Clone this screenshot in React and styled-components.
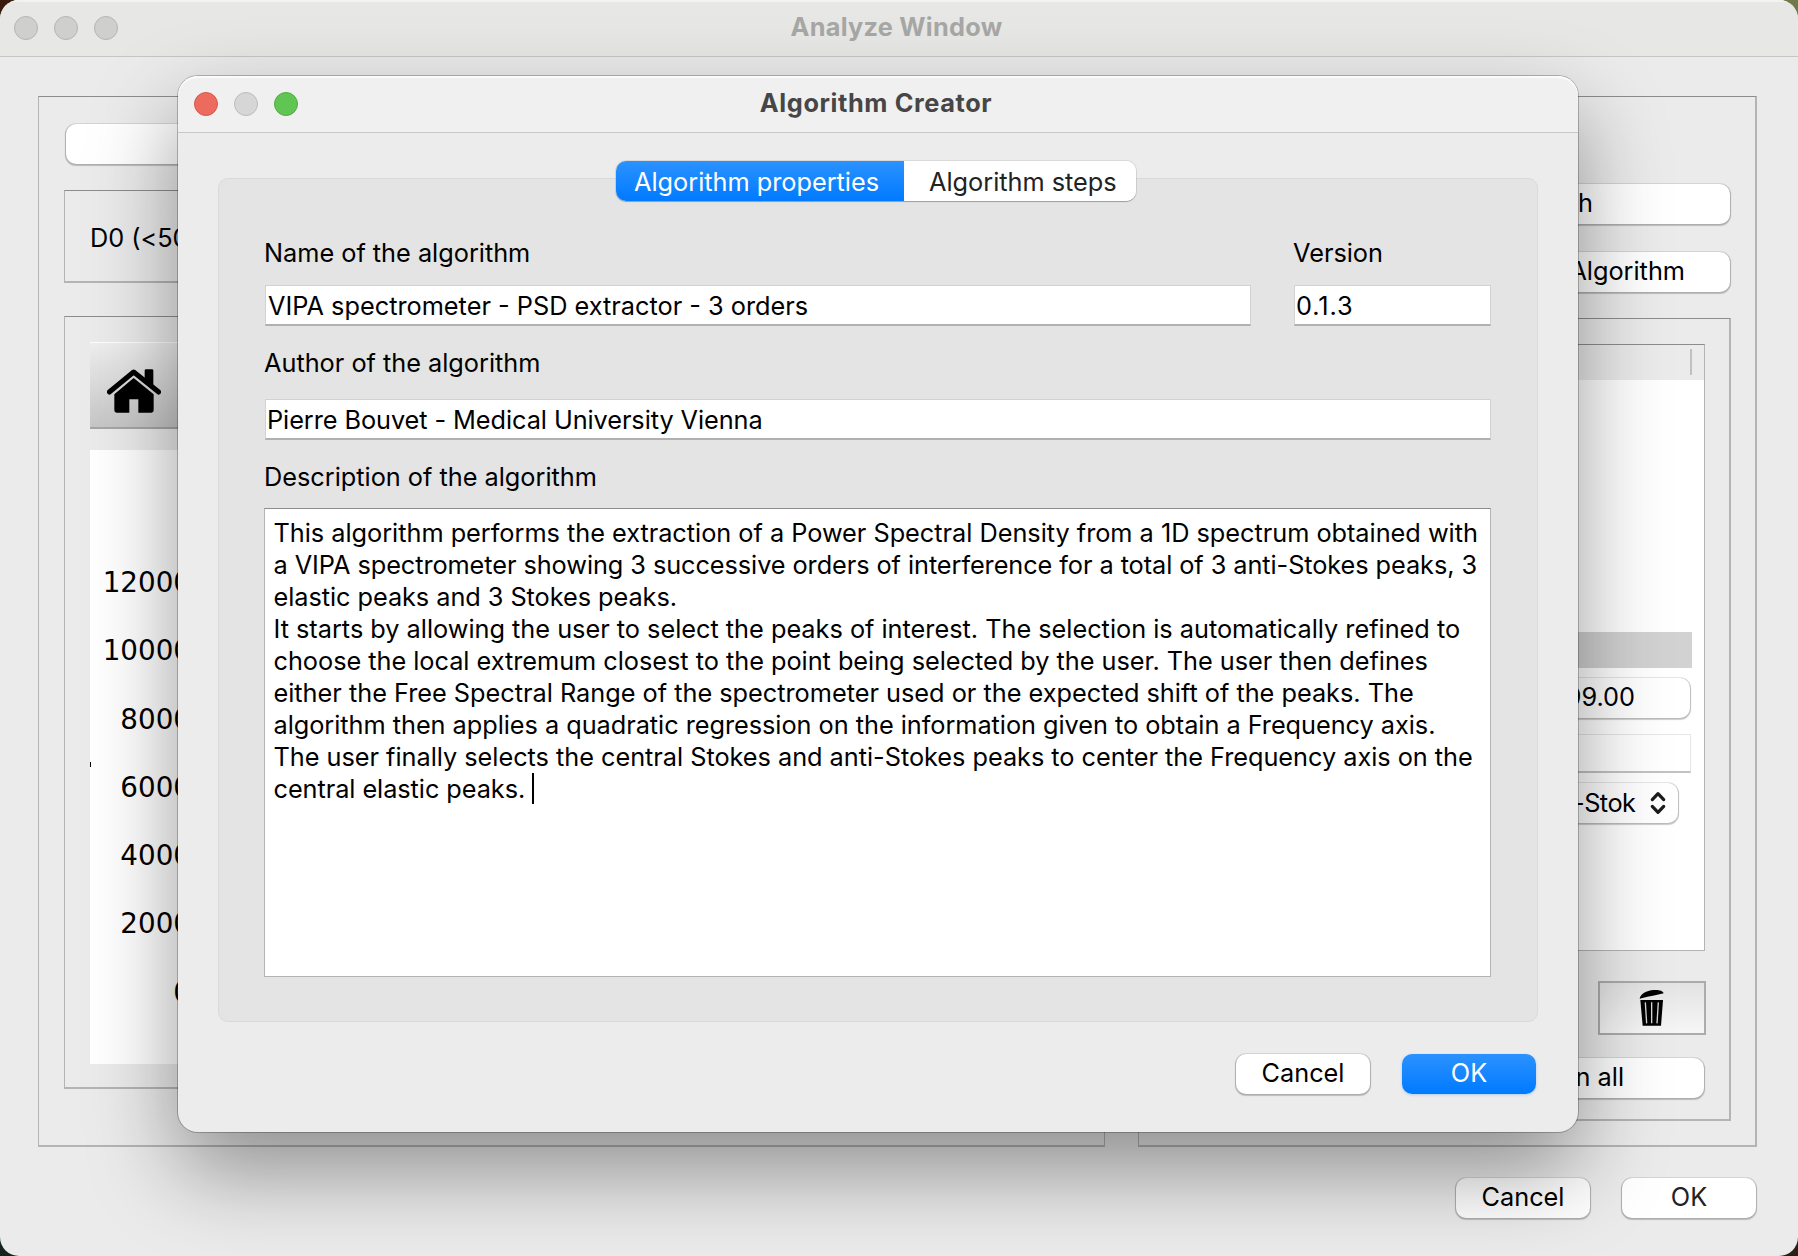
import React from "react";
import styled, { createGlobalStyle, css } from "styled-components";

const GlobalStyle = createGlobalStyle`
  *, *::before, *::after { box-sizing: border-box; }
  body {
    margin: 0;
    overflow: hidden;
    background: linear-gradient(90deg, #3a1a0c 0 50%, #6f7a4a 50% 100%) top / 100% 50% no-repeat,
      linear-gradient(90deg, #15241c 0 50%, #2a2114 50% 100%) bottom / 100% 50% no-repeat;
    font-family: Inter, "Liberation Sans", sans-serif;
    font-size: 25.3px;
    letter-spacing: -0.01px;
    line-height: 32px;
    color: #000;
  }
`;

const Desktop = styled.div`
  position: relative;
  width: 1798px;
  height: 1256px;
`;

const MainWindow = styled.main`
  display: flex;
  flex-direction: column;
  height: 100%;
  border-radius: 19px;
  background: #ebebeb;
  overflow: hidden;
`;

const TitleBar = styled.header`
  flex: none;
  display: grid;
  grid-template-columns: 1fr auto 1fr;
  align-items: center;
  height: 57px;
  padding: ${(p) => (p.$active ? "0 20px 1px 16px" : "0 19px 1px 14px")};
  background: ${(p) => (p.$active ? "#f0f0f0" : "#e7e7e5")};
  border-bottom: 1px solid ${(p) => (p.$active ? "#c8c8c8" : "#c6c6c5")};
  box-shadow: inset 0 2px 1px ${(p) => (p.$active ? "#fbfbfb" : "#f3f3f2")};
`;

const Lights = styled.div`
  display: flex;
  gap: 16px;
`;

const Light = styled.span`
  width: 24px;
  height: 24px;
  border-radius: 50%;
  border: 1px solid ${(p) => p.$edge};
  background: ${(p) => p.$fill};
`;

const Title = styled.h1`
  margin: 0;
  font-size: 25.3px;
  font-weight: 700;
  letter-spacing: ${(p) => p.$tracking}px;
  color: ${(p) => (p.$active ? "#464646" : "#a7a7a5")};
  transform: translateY(-1px);
`;

const MainBody = styled.div`
  flex: 1;
  display: flex;
  flex-direction: column;
  padding: 39px 41px 0 38px;
`;

const Columns = styled.div`
  display: flex;
  gap: 33px;
  height: 1051px;
`;

const frame = css`
  border: 1px solid #b4b4b4;
  border-top-color: #8c8c8c;
  border-bottom-width: 2px;
`;

const LeftGroup = styled.section`
  ${frame}
  width: 1067px;
  display: flex;
  flex-direction: column;
  padding: 27px 25px 56px;

  & > button {
    margin: 0 2px;
  }
`;

const RightGroup = styled.section`
  ${frame}
  border-right-width: 2px;
  flex: 1;
  display: flex;
  flex-direction: column;
  padding: 87px 24px 24px;
`;

const DetectorBox = styled.div`
  ${frame}
  display: flex;
  align-items: center;
  height: 93px;
  margin-top: 26px;
  padding: 3px 25px 0;
`;

const PlotBox = styled.div`
  ${frame}
  flex: 1;
  display: flex;
  flex-direction: column;
  margin-top: 33px;
  padding: 25px 25px 23px;
`;

const PlotToolbar = styled.div`
  display: flex;
  height: 87px;
  padding: 26px 17px 0;
  border-top: 1px solid #fff;
  border-bottom: 2px solid #a6a6a6;
  background: linear-gradient(#eeeeee, #c6c6c6);
`;

const PlotCanvas = styled.div`
  flex: 1;
  display: flex;
  margin-top: 21px;
  background: #fff;
`;

const AxisMark = styled.span`
  width: 1px;
  height: 5px;
  margin-top: 312px;
  background: #000;
`;

const Ticks = styled.ol`
  list-style: none;
  margin: 0;
  padding: 99px 0 0;
  width: 100px;
  font: 27.78px/68.25px "DejaVu Sans", sans-serif;
  letter-spacing: 0;
  text-align: right;
`;

const Button = styled.button`
  flex: none;
  display: flex;
  align-items: center;
  justify-content: ${(p) => (p.$end ? "flex-end" : "center")};
  width: ${(p) => (p.$width ? p.$width + "px" : "auto")};
  height: 40px;
  margin: 0;
  padding: 0 ${(p) => p.$end || 0}px 3px 0;
  border: 0;
  border-radius: 10px;
  font: inherit;
  letter-spacing: inherit;
  color: ${(p) => (p.$primary ? "#fff" : p.$soft ? "#222" : "#000")};
  background: ${(p) => (p.$primary ? "linear-gradient(#2b92ff, #007aff)" : "#fff")};
  box-shadow: ${(p) =>
    p.$primary
      ? "0 1px 3px rgba(0, 110, 240, 0.25)"
      : "0 0 0 1px rgba(0, 0, 0, 0.08), 0 1px 1px 1px rgba(0, 0, 0, 0.2)"};
`;

const Stack = styled.div`
  display: flex;
  flex-direction: column;
  gap: 28px;
  margin-right: 1px;
`;

const AlgorithmBox = styled.div`
  ${frame}
  border-right-width: 2px;
  flex: 1;
  display: flex;
  flex-direction: column;
  margin-top: 26px;
  padding: 25px 24px 0;
`;

const Tree = styled.div`
  display: flex;
  flex-direction: column;
  height: 607px;
  border: 1px solid #b4b4b4;
  border-top-color: #8c8c8c;
  background: #fff;
`;

const TreeHeader = styled.div`
  display: flex;
  justify-content: flex-end;
  height: 35px;
  padding: 4px 12px 5px;
  background: #ebebeb;

  &::after {
    content: "";
    width: 2px;
    background: #c1c1c1;
  }
`;

const TreeRow = styled.div`
  height: 36px;
  margin: 252px 12px 0 0;
  background: #d2d2d2;
`;

const SpinField = styled(Button)`
  margin: 10px 14px 0 0;
`;

const TreeInput = styled.div`
  height: 39px;
  margin: 16px 13px 0 0;
  border: 1px solid #e6e6e6;
  border-bottom: 2px solid #c2c2c2;
`;

const Combo = styled(Button)`
  margin: 10px 26px 0 0;
  padding: 0 12px 1px 0;
  gap: 14px;
`;

const ComboText = styled.span`
  width: 63px;
  overflow: hidden;
  white-space: nowrap;
  letter-spacing: -0.5px;
`;

const TrashButton = styled.button`
  align-self: flex-end;
  display: grid;
  place-items: center;
  width: 108px;
  height: 54px;
  margin: 30px -1px 23px 0;
  padding: 0;
  border: 2px solid #acacac;
  background: linear-gradient(#e3e3e3, #f6f6f6);
`;

const RunButton = styled(Button)`
  margin-right: 1px;
`;

const Actions = styled.div`
  display: flex;
  justify-content: flex-end;
  gap: 32px;
  padding: ${(p) => p.$top}px ${(p) => p.$right}px 0 0;
`;

const Dialog = styled.section`
  position: absolute;
  left: 178px;
  top: 76px;
  width: 1400px;
  height: 1056px;
  display: flex;
  flex-direction: column;
  border-radius: 20px;
  background: #ececec;
  box-shadow: 0 0 0 1px rgba(0, 0, 0, 0.24), 0 38px 88px rgba(0, 0, 0, 0.4);

  & > header {
    border-radius: 20px 20px 0 0;
  }
`;

const DialogBody = styled.div`
  flex: 1;
  display: flex;
  flex-direction: column;
  padding: 28px 40px 0;
`;

const Tabs = styled.div`
  position: relative;
  align-self: center;
  display: flex;
  width: 520px;
  height: 40px;
  margin-right: 4px;
  border-radius: 10px;
  background: #fff;
  box-shadow: 0 0 0 1px rgba(0, 0, 0, 0.08), 0 1px 1px rgba(0, 0, 0, 0.25);
`;

const Tab = styled.button`
  width: ${(p) => p.$width}px;
  margin: 0;
  padding: 1px 0 0 ${(p) => p.$inset}px;
  border: 0;
  border-radius: ${(p) => (p.$selected ? "10px 0 0 10px" : "0 10px 10px 0")};
  font: inherit;
  letter-spacing: inherit;
  text-align: left;
  color: ${(p) => (p.$selected ? "#fff" : "#222")};
  background: ${(p) => (p.$selected ? "linear-gradient(#2b92ff, #007aff)" : "#fff")};
`;

const Panel = styled.div`
  display: flex;
  flex-direction: column;
  height: 844px;
  margin: -23px 0 0;
  padding: 58px 46px 0 45px;
  border: 1px solid #dadada;
  border-radius: 10px;
  background: #e4e4e4;
`;

const FieldRow = styled.div`
  display: flex;
  gap: 42px;
`;

const Field = styled.label`
  display: flex;
  flex-direction: column;
  width: ${(p) => (p.$width ? p.$width + "px" : "auto")};
  margin-top: ${(p) => p.$top || 0}px;
`;

const FieldLabel = styled.span`
  height: 32px;
  margin-bottom: ${(p) => p.$gap}px;
`;

const Input = styled.span`
  height: 41px;
  margin-left: 1px;
  padding: 4px 2px 0 ${(p) => p.$inset ?? 2}px;
  border: 1px solid #d2d2d2;
  border-bottom: 2px solid #b0b0b0;
  background: #fff;
  letter-spacing: ${(p) => p.$tracking || 0}px;
  white-space: nowrap;
`;

const TextArea = styled.div`
  height: 469px;
  padding: 8px 0 0 8.5px;
  border: 1px solid #b4b4b4;
  border-top-color: #8c8c8c;
  background: #fff;
`;

const Line = styled.div`
  display: flex;
  height: 32.05px;
  white-space: pre;
  letter-spacing: ${(p) => p.$tracking}px;
`;

const Caret = styled.i`
  width: 2px;
  height: 31px;
  background: #000;
`;

const HomeIcon = () => (
  <svg width="54" height="44" viewBox="57 94 162 132">
    <path d="M137 121 L197 170 V218 Q197 225 190 225 H151 V185 H124 V225 H86 Q79 225 79 218 V170 Z" />
    <path d="M170 99 Q170 95 174 95 H192 Q196 95 196 99 V146 L170 124 Z" />
    <path d="M64 163 L137 103 L212 163" fill="none" stroke="#000" strokeWidth="15" strokeLinecap="round" strokeLinejoin="round" />
  </svg>
);

const TrashIcon = () => (
  <svg width="26" height="38" viewBox="148 42 78 114">
    <path d="M150 71 C152 58 170 46 192 45 C208 44 220 47 222 55 Q200 60 150 71 Z" />
    <path d="M152 75 H220 L214 152 H159 Z" />
    <path d="M167 82 L171 145 M186 82 V145 M206 82 L202 145" stroke="#d8d8d8" strokeWidth="4" />
  </svg>
);

const UpDownIcon = () => (
  <svg width="16" height="24" viewBox="0 0 16 24" fill="none" stroke="#1c1c1c" strokeWidth="3.2" strokeLinecap="round" strokeLinejoin="round">
    <path d="M2.3 8.6 L8 2.6 L13.7 8.6 M2.3 15.4 L8 21.4 L13.7 15.4" />
  </svg>
);

const idle = { $fill: "#cfcfcd", $edge: "#b4b4b2" };

const DESCRIPTION = [
  ["This algorithm performs the extraction of a Power Spectral Density from a 1D spectrum obtained with", -0.02],
  ["a VIPA spectrometer showing 3 successive orders of interference for a total of 3 anti-Stokes peaks, 3", -0.07],
  ["elastic peaks and 3 Stokes peaks.", -0.05],
  ["It starts by allowing the user to select the peaks of interest. The selection is automatically refined to", -0.01],
  ["choose the local extremum closest to the point being selected by the user. The user then defines", -0.026],
  ["either the Free Spectral Range of the spectrometer used or the expected shift of the peaks. The", -0.009],
  ["algorithm then applies a quadratic regression on the information given to obtain a Frequency axis.", -0.035],
  ["The user finally selects the central Stokes and anti-Stokes peaks to center the Frequency axis on the", -0.025],
  ["central elastic peaks. ", -0.06],
];

const TICKS = [12000, 10000, 8000, 6000, 4000, 2000, 0];

export default function App() {
  return (
    <Desktop>
      <GlobalStyle />
      <MainWindow>
        <TitleBar>
          <Lights>
            <Light {...idle} />
            <Light {...idle} />
            <Light {...idle} />
          </Lights>
          <Title $tracking={0.26}>Analyze Window</Title>
        </TitleBar>
        <MainBody>
          <Columns>
            <LeftGroup>
              <Button />
              <DetectorBox>D0 (&lt;50</DetectorBox>
              <PlotBox>
                <PlotToolbar>
                  <HomeIcon />
                </PlotToolbar>
                <PlotCanvas>
                  <AxisMark />
                  <Ticks>
                    {TICKS.map((t) => (
                      <li key={t}>{t}</li>
                    ))}
                  </Ticks>
                </PlotCanvas>
              </PlotBox>
            </LeftGroup>
            <RightGroup>
              <Stack>
                <Button $end={137}>h</Button>
                <Button $end={45}>Algorithm</Button>
              </Stack>
              <AlgorithmBox>
                <Tree>
                  <TreeHeader />
                  <TreeRow />
                  <SpinField $end={55}>99.00</SpinField>
                  <TreeInput />
                  <Combo $end={12}>
                    <ComboText>-Stokes</ComboText>
                    <UpDownIcon />
                  </Combo>
                </Tree>
                <TrashButton>
                  <TrashIcon />
                </TrashButton>
                <RunButton $end={80}>n all</RunButton>
              </AlgorithmBox>
            </RightGroup>
          </Columns>
          <Actions $top={31} $right={1}>
            <Button $width={134}>Cancel</Button>
            <Button $width={134} $soft>OK</Button>
          </Actions>
        </MainBody>
      </MainWindow>

      <Dialog>
        <TitleBar $active>
          <Lights>
            <Light $fill="#ed6a5f" $edge="#d6574c" />
            <Light $fill="#d6d6d6" $edge="#bcbcbc" />
            <Light $fill="#61c554" $edge="#50ab43" />
          </Lights>
          <Title $active $tracking={0.61}>Algorithm Creator</Title>
        </TitleBar>
        <DialogBody>
          <Tabs>
            <Tab $selected $width={288} $inset={18}>Algorithm properties</Tab>
            <Tab $width={232} $inset={25}>Algorithm steps</Tab>
          </Tabs>
          <Panel>
            <FieldRow>
              <Field $width={987}>
                <FieldLabel $gap={16}>Name of the algorithm</FieldLabel>
                <Input>VIPA spectrometer - PSD extractor - 3 orders</Input>
              </Field>
              <Field $width={198}>
                <FieldLabel $gap={16}>Version</FieldLabel>
                <Input $inset={1} $tracking={0.92}>0.1.3</Input>
              </Field>
            </FieldRow>
            <Field $top={21}>
              <FieldLabel $gap={20}>Author of the algorithm</FieldLabel>
              <Input $inset={1} $tracking={-0.07}>Pierre Bouvet - Medical University Vienna</Input>
            </Field>
            <Field $top={21}>
              <FieldLabel $gap={15}>Description of the algorithm</FieldLabel>
              <TextArea>
                {DESCRIPTION.map(([text, tracking], i) => (
                  <Line key={i} $tracking={tracking}>
                    {text}
                    {i === DESCRIPTION.length - 1 && <Caret />}
                  </Line>
                ))}
              </TextArea>
            </Field>
          </Panel>
          <Actions $top={32} $right={2}>
            <Button $width={134}>Cancel</Button>
            <Button $width={134} $primary>OK</Button>
          </Actions>
        </DialogBody>
      </Dialog>
    </Desktop>
  );
}
